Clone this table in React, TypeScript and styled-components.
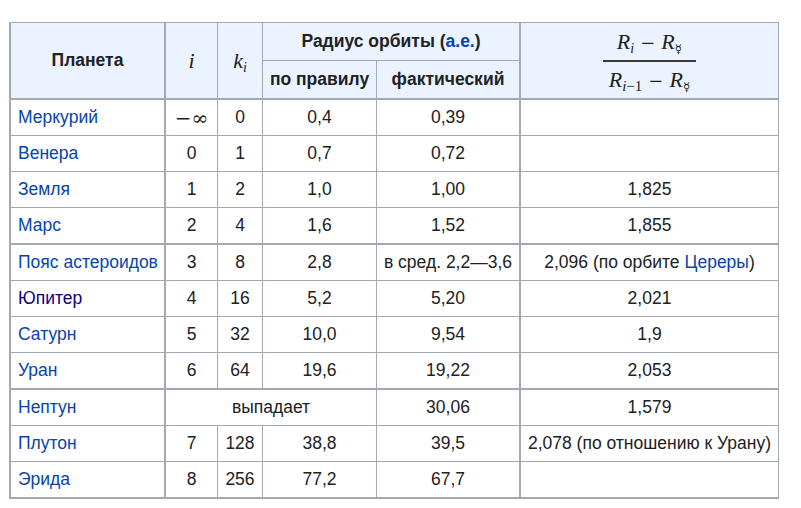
import React from "react";
import styled, { createGlobalStyle } from "styled-components";

const Global = createGlobalStyle`
  html, body { margin: 0; padding: 0; background: #fff; }
`;

const BORDER = "#a2a9b1";

const Page = styled.div`
  padding: 22px 0 0 9px;
  font-family: "Liberation Sans", Arial, sans-serif;
  font-size: 17.5px;
  color: #202122;
`;

const Table = styled.table`
  border-collapse: separate;
  border-spacing: 0;
  table-layout: fixed;
  width: 770px;
  border-top: 1px solid ${BORDER};
  border-left: 2px solid ${BORDER};
`;

type Edge = { $right: number; $bottom: number };

const HeadCell = styled.th<Edge & { $h: number }>`
  box-sizing: border-box;
  height: ${(p) => p.$h}px;
  padding: 0 5px;
  background: #eaf3ff;
  font-weight: bold;
  text-align: center;
  vertical-align: middle;
  border-right: ${(p) => p.$right}px solid ${BORDER};
  border-bottom: ${(p) => p.$bottom}px solid ${BORDER};
  white-space: nowrap;
`;

const Cell = styled.td<Edge & { $left?: boolean }>`
  box-sizing: border-box;
  height: ${(p) => 35 + p.$bottom}px;
  padding: 0 4px 0 ${(p) => (p.$left ? 7 : 4)}px;
  background: #fff;
  text-align: ${(p) => (p.$left ? "left" : "center")};
  vertical-align: middle;
  border-right: ${(p) => p.$right}px solid ${BORDER};
  border-bottom: ${(p) => p.$bottom}px solid ${BORDER};
  white-space: nowrap;
`;

const Link = styled.a<{ $visited?: boolean }>`
  color: ${(p) => (p.$visited ? "#0b0080" : "#0645ad")};
  text-decoration: none;
`;

const MathVar = styled.span<{ $size?: number }>`
  font-family: "Liberation Serif", "Times New Roman", serif;
  font-style: italic;
  font-weight: normal;
  font-size: ${(p) => p.$size ?? 22}px;
`;

const MathOp = styled.span`
  font-family: "DejaVu Serif", serif;
  font-style: normal;
  font-weight: normal;
  font-size: 18px;
  margin: 0 6px;
`;

const Sub = styled.sub<{ $size?: number }>`
  font-size: ${(p) => p.$size ?? 14}px;
  font-weight: normal;
  vertical-align: -4px;
  line-height: 0;
  font-family: "Liberation Serif", serif;
`;

const Merc = styled.span`
  font-family: "DejaVu Sans", sans-serif;
  font-style: normal;
  font-size: 12px;
`;

const Minf = styled.span`
  font-family: "DejaVu Serif", serif;
  font-size: 20px;
`;

const Fraction = styled.span`
  display: inline-flex;
  flex-direction: column;
  align-items: center;
  vertical-align: middle;
  line-height: 1;
  font-weight: normal;
`;

const Numer = styled.span`
  padding: 0 10px 7px;
  white-space: nowrap;
`;

const Denom = styled.span`
  padding: 7px 6px 0;
  border-top: 2px solid #3a3a3a;
  white-space: nowrap;
`;

const colWidths = [155, 52, 45, 114, 144, 258];

type Row = {
  name: string;
  visited?: boolean;
  i?: React.ReactNode;
  k?: string;
  rule?: string;
  actual: string;
  ratio?: React.ReactNode;
  missing?: boolean;
  thick?: boolean;
};

const rows: Row[] = [
  { name: "Меркурий", i: <Minf>−∞</Minf>, k: "0", rule: "0,4", actual: "0,39" },
  { name: "Венера", i: "0", k: "1", rule: "0,7", actual: "0,72" },
  { name: "Земля", i: "1", k: "2", rule: "1,0", actual: "1,00", ratio: "1,825" },
  { name: "Марс", i: "2", k: "4", rule: "1,6", actual: "1,52", ratio: "1,855", thick: true },
  {
    name: "Пояс астероидов",
    i: "3",
    k: "8",
    rule: "2,8",
    actual: "в сред. 2,2—3,6",
    ratio: (
      <>
        2,096 (по орбите <Link href="#">Цереры</Link>)
      </>
    ),
  },
  { name: "Юпитер", visited: true, i: "4", k: "16", rule: "5,2", actual: "5,20", ratio: "2,021" },
  { name: "Сатурн", i: "5", k: "32", rule: "10,0", actual: "9,54", ratio: "1,9" },
  { name: "Уран", i: "6", k: "64", rule: "19,6", actual: "19,22", ratio: "2,053", thick: true },
  { name: "Нептун", missing: true, actual: "30,06", ratio: "1,579" },
  { name: "Плутон", i: "7", k: "128", rule: "38,8", actual: "39,5", ratio: "2,078 (по отношению к Урану)" },
  { name: "Эрида", i: "8", k: "256", rule: "77,2", actual: "67,7", thick: true },
];

const MercSub = () => (
  <Sub>
    <Merc>☿</Merc>
  </Sub>
);

export default function App() {
  return (
    <Page>
      <Global />
      <Table>
        <colgroup>
          {colWidths.map((w, idx) => (
            <col key={idx} style={{ width: w }} />
          ))}
        </colgroup>
        <thead>
          <tr>
            <HeadCell rowSpan={2} $right={2} $bottom={2} $h={77}>
              Планета
            </HeadCell>
            <HeadCell rowSpan={2} $right={1} $bottom={2} $h={77}>
              <MathVar>i</MathVar>
            </HeadCell>
            <HeadCell rowSpan={2} $right={1} $bottom={2} $h={77}>
              <MathVar>k</MathVar>
              <Sub>
                <i>i</i>
              </Sub>
            </HeadCell>
            <HeadCell colSpan={2} $right={2} $bottom={1} $h={38}>
              Радиус орбиты (<Link href="#">а.е.</Link>)
            </HeadCell>
            <HeadCell rowSpan={2} $right={1} $bottom={2} $h={77}>
              <Fraction>
                <Numer>
                  <MathVar>R</MathVar>
                  <Sub>
                    <i>i</i>
                  </Sub>
                  <MathOp>−</MathOp>
                  <MathVar>R</MathVar>
                  <MercSub />
                </Numer>
                <Denom>
                  <MathVar>R</MathVar>
                  <Sub $size={15}>
                    <i>i</i>−1
                  </Sub>
                  <MathOp>−</MathOp>
                  <MathVar>R</MathVar>
                  <MercSub />
                </Denom>
              </Fraction>
            </HeadCell>
          </tr>
          <tr>
            <HeadCell $right={1} $bottom={2} $h={39}>
              по правилу
            </HeadCell>
            <HeadCell $right={2} $bottom={2} $h={39}>
              фактический
            </HeadCell>
          </tr>
        </thead>
        <tbody>
          {rows.map((r) => {
            const b = r.thick ? 2 : 1;
            return (
              <tr key={r.name}>
                <Cell $left $right={2} $bottom={b}>
                  <Link href="#" $visited={r.visited}>
                    {r.name}
                  </Link>
                </Cell>
                {r.missing ? (
                  <Cell colSpan={3} $right={1} $bottom={b}>
                    выпадает
                  </Cell>
                ) : (
                  <>
                    <Cell $right={1} $bottom={b}>{r.i}</Cell>
                    <Cell $right={1} $bottom={b}>{r.k}</Cell>
                    <Cell $right={1} $bottom={b}>{r.rule}</Cell>
                  </>
                )}
                <Cell $right={2} $bottom={b}>{r.actual}</Cell>
                <Cell $right={1} $bottom={b}>{r.ratio}</Cell>
              </tr>
            );
          })}
        </tbody>
      </Table>
    </Page>
  );
}
